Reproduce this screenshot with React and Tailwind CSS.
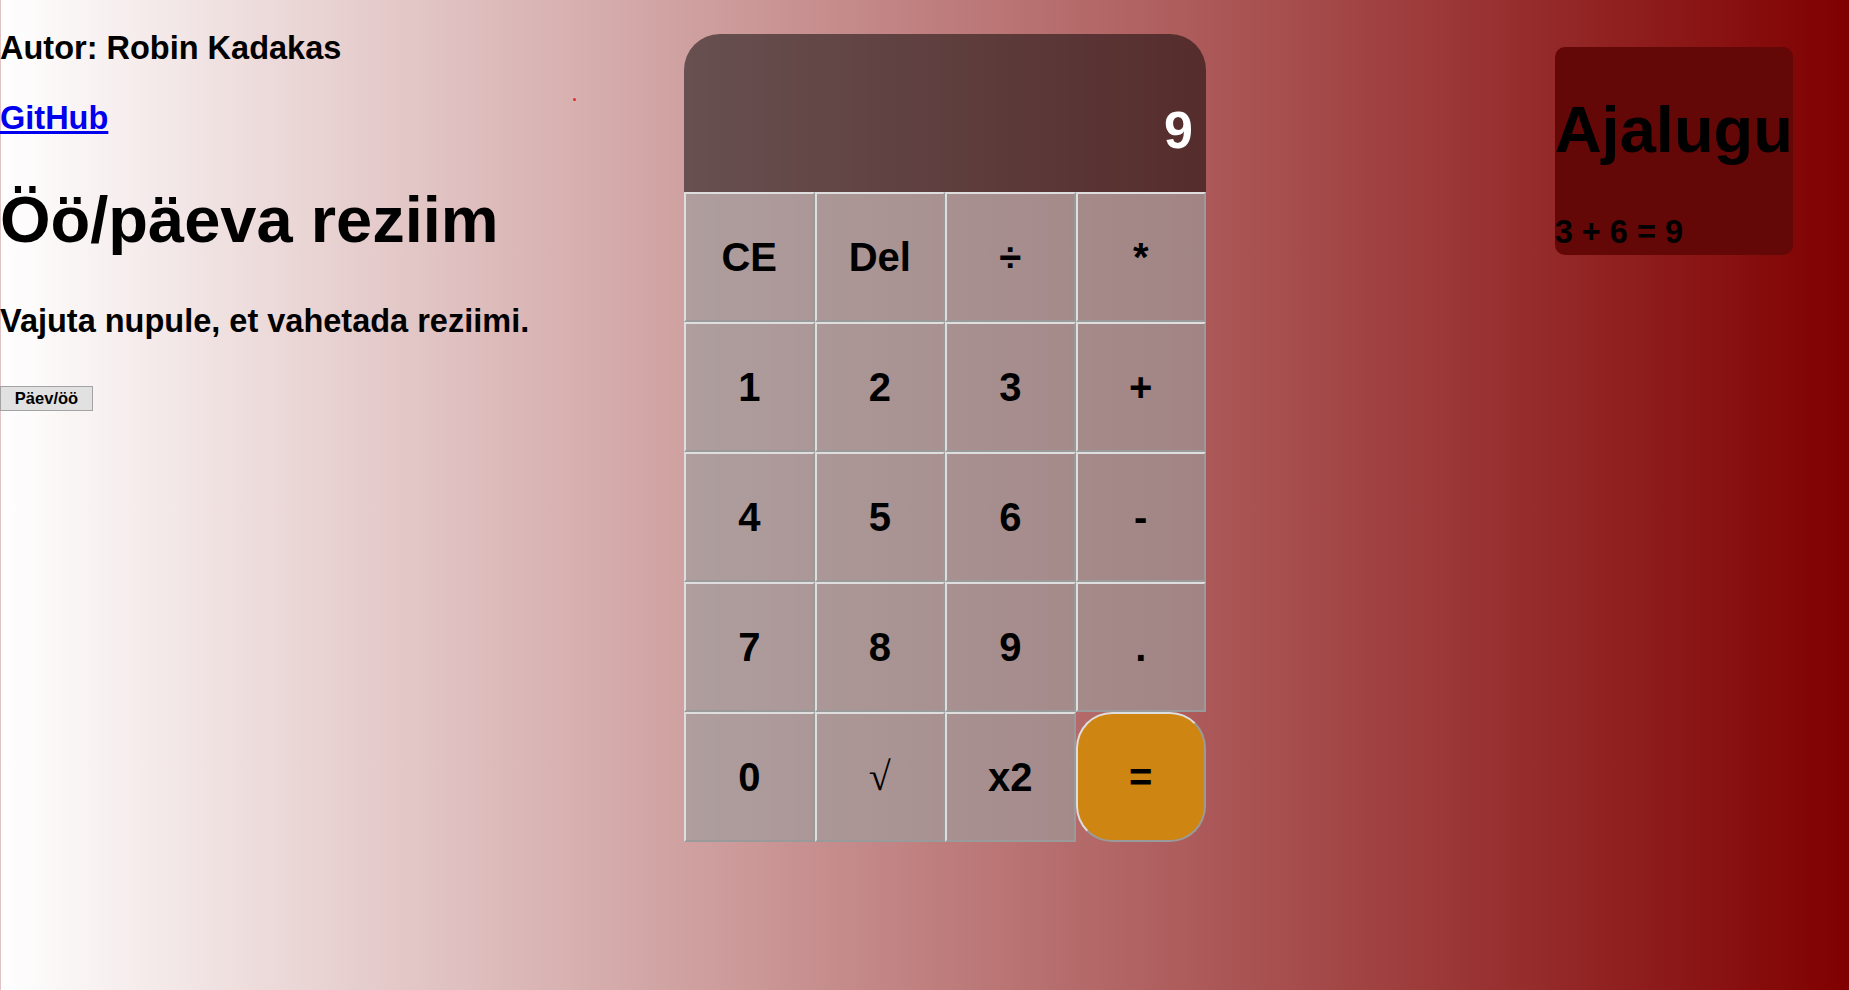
import React from 'react';

const keys = [
  'CE', 'Del', '÷', '*',
  '1', '2', '3', '+',
  '4', '5', '6', '-',
  '7', '8', '9', '.',
  '0', '√', 'x2', '=',
];

const CalcKey = ({ label }) => {
  const isEquals = label === '=';
  const isRoot = label === '√';
  return (
    <button
      className={
        'h-[130px] flex items-center justify-center border-2 border-t-[#dedede] border-l-[#dedede] border-r-[#9a9a9a] border-b-[#9a9a9a] text-[40px] leading-none text-black ' +
        (isRoot ? "font-normal font-['Liberation_Serif',serif] " : 'font-bold ') +
        (isEquals ? 'bg-[#ce8511] rounded-[36px]' : 'bg-[#9d9d9da3]')
      }
    >
      {label}
    </button>
  );
};

const App = () => {
  return (
    <div className="min-h-screen w-full flex bg-[linear-gradient(to_right,#ffffff,#800000)] shadow-[inset_1px_0_0_#e2c4c7] font-['Liberation_Sans',Arial,sans-serif] text-black">
      {/* left info column */}
      <div className="relative w-[684px] shrink-0 flex flex-col items-start">
        <p className="pt-[32px] text-[32.5px] font-bold leading-none">Autor: Robin Kadakas</p>
        <a href="#" className="mt-[37.5px] text-[32.5px] font-bold leading-none text-[#0000ee] underline">
          GitHub
        </a>
        <h1 className="mt-[52px] text-[65px] font-bold leading-none">Öö/päeva reziim</h1>
        <p className="mt-[53.5px] text-[32.5px] font-bold leading-none">Vajuta nupule, et vahetada reziimi.</p>
        <button className="mt-[48px] w-[93px] h-[25px] bg-[#e1e1e1] border border-[#a3a3a3] text-[16.5px] font-bold leading-none">
          Päev/öö
        </button>
        <span className="absolute left-[573px] top-[98px] w-[3px] h-[3px] rounded-full bg-[#e02a2a]" />
      </div>

      {/* calculator */}
      <div className="mt-[34px] w-[522px] shrink-0 self-start">
        <div className="h-[158px] rounded-t-[36px] bg-black/50 flex items-end justify-end pr-[13px] pb-[36px] text-white text-[52px] font-bold leading-none">
          9
        </div>
        <div className="grid grid-cols-4">
          {keys.map((k) => (
            <CalcKey key={k} label={k} />
          ))}
        </div>
      </div>

      {/* history */}
      <div className="flex-1 flex justify-end items-start pr-[56px]">
        <div className="mt-[47px] rounded-[10px] bg-[#630707] pt-[50px] pb-[6px]">
          <h2 className="text-[65px] font-bold leading-none">Ajalugu</h2>
          <p className="mt-[54px] text-[32.5px] font-bold leading-none">3 + 6 = 9</p>
        </div>
      </div>
    </div>
  );
};

export default App;
